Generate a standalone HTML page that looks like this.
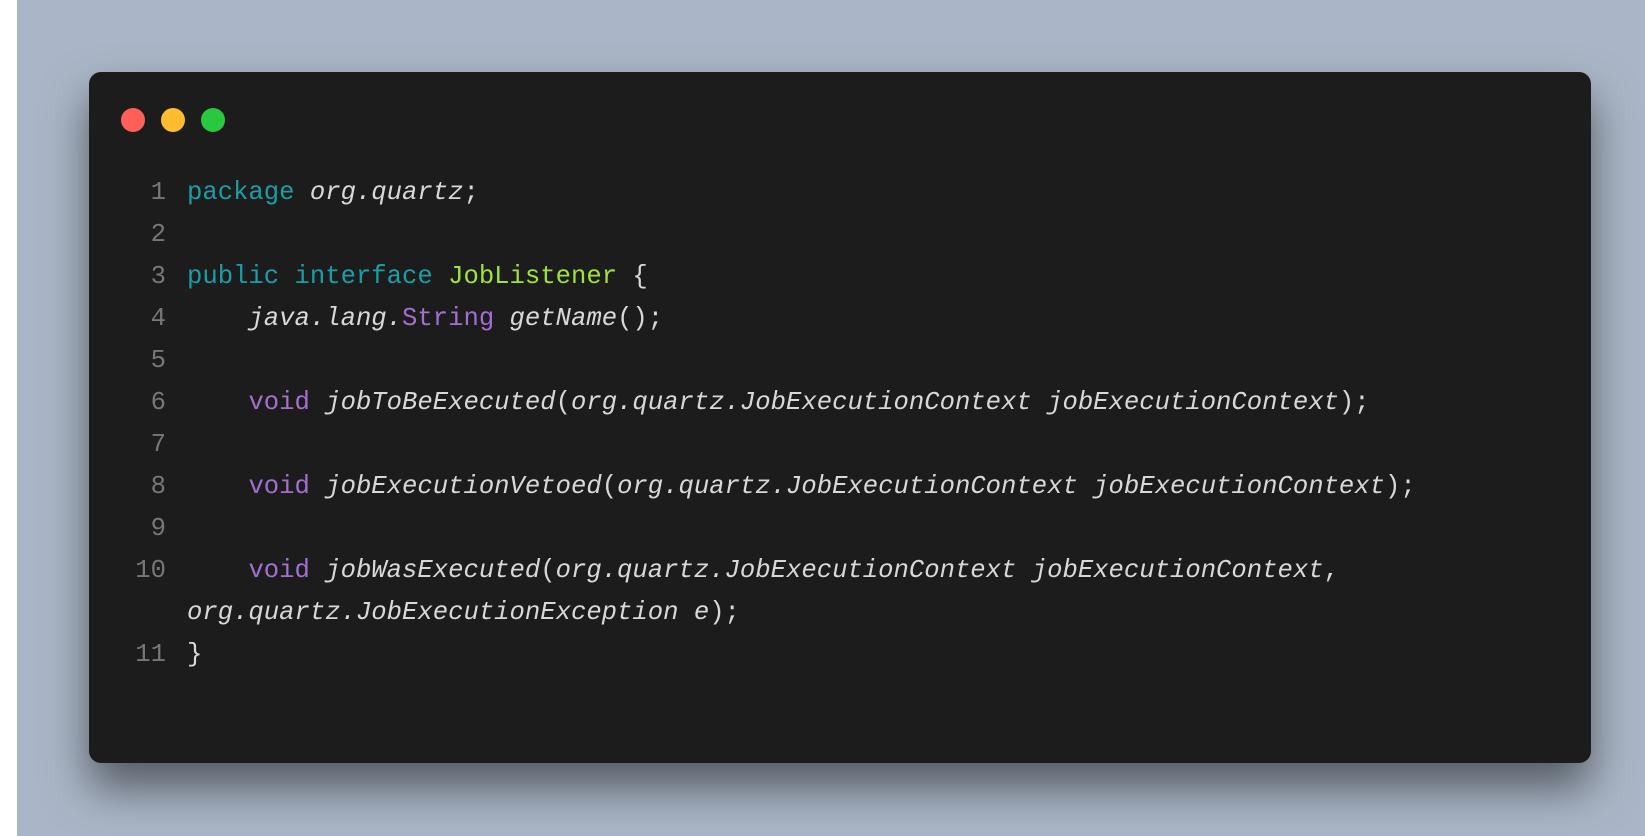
<!DOCTYPE html>
<html><head><meta charset="utf-8"><style>
html,body{margin:0;padding:0;width:1645px;height:836px;overflow:hidden;background:#fff}
.bg{position:absolute;left:17px;top:0;width:1628px;height:836px;background:#aab6c7}
.win{position:absolute;left:89px;top:72px;width:1502px;height:691px;background:#1c1c1c;border-radius:12px;box-shadow:0 25px 45px rgba(0,0,0,0.5)}
.dot{position:absolute;top:36px;width:24px;height:24px;border-radius:50%}
.code{position:absolute;left:0;top:100px;font-family:"Liberation Mono",monospace;font-size:25.6px;line-height:42px;color:#d8d8d8}
.ln{position:absolute;left:0;width:77px;text-align:right;color:#777}
.l{position:absolute;left:98px;white-space:pre;width:1380px;font-style:italic}
.k{color:#1a9ea6;font-style:normal}
.c{color:#9ee23a;font-style:normal}
.p{color:#a36fce;font-style:normal}
.n{font-style:normal}
</style></head><body>
<div class="bg"></div>
<div class="win">
<div class="dot" style="left:32px;background:#ff5f57"></div>
<div class="dot" style="left:72px;background:#febc2e"></div>
<div class="dot" style="left:112px;background:#28c840"></div>
<div class="code">
<div class="ln" style="top:0">1</div><div class="l" style="top:0"><span class="k">package</span> org.quartz<span class="n">;</span></div>
<div class="ln" style="top:42px">2</div>
<div class="ln" style="top:84px">3</div><div class="l" style="top:84px"><span class="k">public</span> <span class="k">interface</span> <span class="c">JobListener</span> <span class="n">{</span></div>
<div class="ln" style="top:126px">4</div><div class="l" style="top:126px">    java.lang.<span class="p">String</span> getName<span class="n">();</span></div>
<div class="ln" style="top:168px">5</div>
<div class="ln" style="top:210px">6</div><div class="l" style="top:210px">    <span class="p">void</span> jobToBeExecuted<span class="n">(</span>org.quartz.JobExecutionContext jobExecutionContext<span class="n">);</span></div>
<div class="ln" style="top:252px">7</div>
<div class="ln" style="top:294px">8</div><div class="l" style="top:294px">    <span class="p">void</span> jobExecutionVetoed<span class="n">(</span>org.quartz.JobExecutionContext jobExecutionContext<span class="n">);</span></div>
<div class="ln" style="top:336px">9</div>
<div class="ln" style="top:378px">10</div><div class="l" style="top:378px">    <span class="p">void</span> jobWasExecuted<span class="n">(</span>org.quartz.JobExecutionContext jobExecutionContext<span class="n">,</span></div>
<div class="l" style="top:420px">org.quartz.JobExecutionException e<span class="n">);</span></div>
<div class="ln" style="top:462px">11</div><div class="l" style="top:462px"><span class="n">}</span></div>
</div>
</div>
</body></html>
